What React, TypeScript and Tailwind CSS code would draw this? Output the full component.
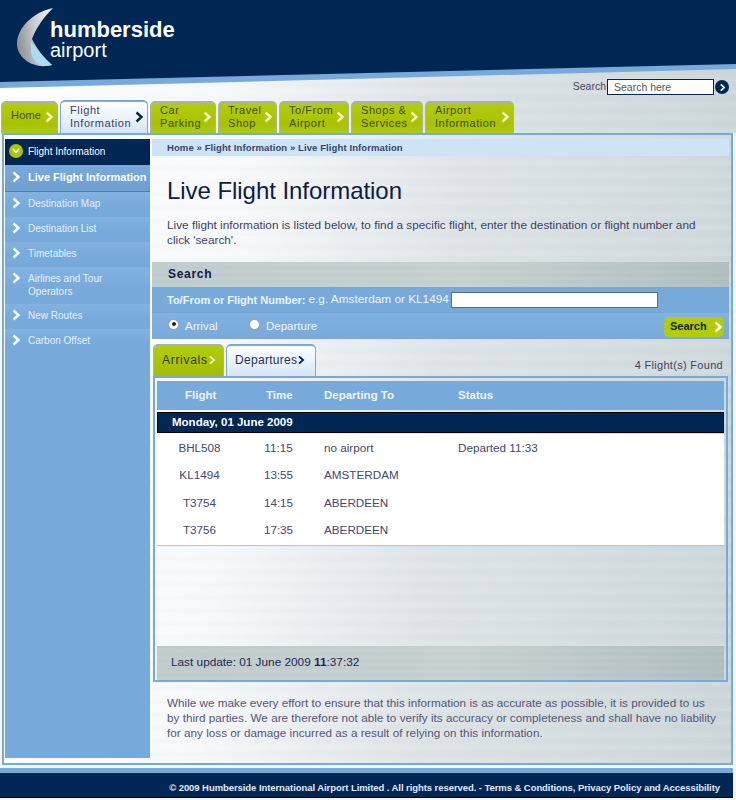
const Chev = ({ c = "#ffffff", s = 10 }: { c?: string; s?: number }) => (
  <svg width={s} height={s + 2} viewBox="0 0 10 12" className="shrink-0">
    <path d="M2.5 1.5 L7.5 6 L2.5 10.5" fill="none" stroke={c} strokeWidth="2.4" />
  </svg>
);

const tabs = [
  { l: ["Home"], w: "w-[57px]" },
  { l: ["Flight", "Information"], w: "w-[88px]", active: true },
  { l: ["Car", "Parking"], w: "w-[66px]" },
  { l: ["Travel", "Shop"], w: "w-[59px]" },
  { l: ["To/From", "Airport"], w: "w-[70px]" },
  { l: ["Shops &", "Services"], w: "w-[72px]" },
  { l: ["Airport", "Information"], w: "w-[89px]" },
];

const side = [
  { t: ["Destination Map"], h: "h-[25px]" },
  { t: ["Destination List"], h: "h-[25px]" },
  { t: ["Timetables"], h: "h-[25px]" },
  { t: ["Airlines and Tour", "Operators"], h: "h-[37px]" },
  { t: ["New Routes"], h: "h-[25px]" },
  { t: ["Carbon Offset"], h: "h-[25px]" },
];

const rows = [
  ["BHL508", "11:15", "no airport", "Departed 11:33"],
  ["KL1494", "13:55", "AMSTERDAM", ""],
  ["T3754", "14:15", "ABERDEEN", ""],
  ["T3756", "17:35", "ABERDEEN", ""],
];

const metal =
  "bg-[repeating-linear-gradient(0deg,rgba(255,255,255,0.07)_0px,rgba(255,255,255,0.07)_3px,rgba(255,255,255,0)_6px,rgba(120,135,140,0.025)_9px,rgba(255,255,255,0)_13px),linear-gradient(95deg,#ffffff_0%,#f6f8f9_32%,#dfe5e7_58%,#d6dee0_78%,#ccd6d8_100%)]";
const bar =
  "bg-[repeating-linear-gradient(0deg,rgba(255,255,255,0.06)_0px,rgba(255,255,255,0.06)_2px,rgba(255,255,255,0)_4px,rgba(255,255,255,0)_7px),linear-gradient(90deg,#bfcaca_0%,#c6d0cf_55%,#afbdbd_100%)]";

export default function App() {
  return (
    <div className="relative w-[736px] h-[800px] overflow-hidden bg-[#f4f6f7] font-['Liberation_Sans',Arial,sans-serif] text-[11px] text-[#3d3f6b]">
      <div className={metal}>
        <header className="relative h-[100px]">
          <svg className="absolute left-0 top-0" width="736" height="90" viewBox="0 0 736 90">
            <polygon points="0,0 736,0 736,69 0,88" fill="#77a9da" />
            <polygon points="0,0 736,0 736,64 0,82" fill="#002654" />
            <defs>
              <linearGradient id="m" x1="0" y1="0.5" x2="1" y2="0.2">
                <stop offset="0" stopColor="#8f9499" />
                <stop offset="0.55" stopColor="#cfd2d5" />
                <stop offset="1" stopColor="#eef0f1" />
              </linearGradient>
            </defs>
            <path d="M53 8 C33 12 17 28 17 44 C17 58 34 70 52 65 C44 58 37 49 32 39 C36 28 44 17 53 8 Z" fill="url(#m)" />
            <path d="M31 42 C37 50 44 58 52 65 C42 68 33 62 31 53 Z" fill="#a9dcf5" />
          </svg>
          <div className="relative pl-[50px] pt-[18px] text-white">
            <div className="text-[22px] leading-[24px] font-bold">humberside</div>
            <div className="text-[20px] leading-[16px]">airport</div>
          </div>
          <div className="absolute right-[7px] top-[79px] flex items-center">
            <span className="text-[10.5px] text-[#3f4a63]">Search</span>
            <div className="w-[107px] h-[16px] ml-[1px] border border-[#002654] bg-white pl-[6px] text-[10.5px] leading-[15px] text-[#555]">
              Search here
            </div>
            <div className="ml-[1px] w-[14px] h-[14px] rounded-full bg-[#002654] flex items-center justify-center">
              <Chev s={7} />
            </div>
          </div>
        </header>

        <nav className="relative z-10 flex items-end gap-[2px] pl-[1px] h-[33px]">
          {tabs.map((t) => (
            <div
              key={t.l[0]}
              className={`${t.w} h-[32px] rounded-t-[5px] flex items-center justify-between pl-[9px] pr-[3px] pb-[2px] text-[11px] leading-[13px] tracking-[0.55px] border-t-2 border-x ${
                t.active
                  ? "h-[33px] border-[#77a9da] bg-[linear-gradient(180deg,#ffffff,#d6e6f6)] text-[#3a3f68]"
                  : "border-[#a9b3a8] bg-[linear-gradient(180deg,#b4cc10,#a9c200_70%,#b0c81a)] text-[#3d4d10]"
              }`}
            >
              <div className={t.l.length === 1 ? "mb-[4px] tracking-[0.2px]" : ""}>
                {t.l.map((x) => (
                  <div key={x} className="whitespace-nowrap">{x}</div>
                ))}
              </div>
              <Chev c={t.active ? "#002654" : "#f2f6c8"} />
            </div>
          ))}
        </nav>
      </div>

      <main className={`ml-[2px] mr-[3px] h-[632px] border-2 border-[#77a9da] flex gap-[2px] pl-[1px] pr-[2px] pt-[4px] pb-[5px] ${metal}`}>
        <aside className="w-[145px] h-full bg-[#77a9da] text-white shrink-0">
          <div className="h-[26px] bg-[#002654] flex items-center pl-[4px] pb-[2px] gap-[5px] text-[10px]">
            <span className="w-[14px] h-[14px] rounded-full bg-[#a9c700] flex items-center justify-center">
              <svg width="8" height="6" viewBox="0 0 8 6"><path d="M1 1 L4 4.5 L7 1" fill="none" stroke="#fff" strokeWidth="1.6" /></svg>
            </span>
            Flight Information
          </div>
          <div className="h-[27px] border-b border-[#4f7fb0] flex items-center pl-[6px] pb-[2px] gap-[7px] text-[11px] font-bold bg-[linear-gradient(180deg,#77a9da,#6f9fd0)] whitespace-nowrap">
            <Chev />
            Live Flight Information
          </div>
          {side.map((s) => (
            <div key={s.t[0]} className={`${s.h} flex items-start pt-[5px] pl-[6px] gap-[7px] text-[10px] leading-[13px] text-[#e6f0fa] bg-[linear-gradient(180deg,#82b2e0,#77a9da_60%)]`}>
              <Chev />
              <div>
                {s.t.map((x) => (
                  <div key={x}>{x}</div>
                ))}
              </div>
            </div>
          ))}
        </aside>

        <section className="flex-1 min-w-0 flex flex-col">
          <div className="h-[17px] bg-[#cfe3f6] pl-[15px] text-[9.5px] leading-[18px] font-bold tracking-[0.1px] text-[#34466b]">
            Home » Flight Information » Live Flight Information
          </div>
          <h1 className="mt-[20px] pl-[15px] text-[24px] leading-[30px] font-normal tracking-[-0.05px] text-[#0f1c44]">
            Live Flight Information
          </h1>
          <p className="mt-[12px] pl-[15px] pr-[30px] text-[11.8px] leading-[15px]">
            Live flight information is listed below, to find a specific flight, enter the destination or flight number and click 'search'.
          </p>

          <div className={`mt-[14px] h-[25px] ${bar} pl-[16px] text-[12px] leading-[25px] font-bold tracking-[0.7px] text-[#0e2048]`}>
            Search
          </div>
          <div className="h-[52px] bg-[#77a9da] text-[#eef5fb] text-[11px]">
            <div className="h-[26px] flex items-center pl-[15px]">
              <span className="font-bold">To/From or Flight Number:</span>
              <span className="ml-[3px] text-[11.8px]">e.g. Amsterdam or KL1494</span>
              <div className="ml-[2px] w-[207px] h-[16px] bg-white border border-[#5f6c7d]" />
            </div>
            <div className="h-[26px] flex items-center pl-[16px] pr-[5px] pt-[1px] bg-[linear-gradient(180deg,#82b2e0,#77a9da)] text-[11.5px]">
              <span className="mb-[5px] w-[11px] h-[11px] rounded-full bg-white border border-[#999] flex items-center justify-center">
                <span className="w-[4px] h-[4px] rounded-full bg-[#222]" />
              </span>
              <span className="ml-[6px] w-[64px]">Arrival</span>
              <span className="mb-[5px] w-[11px] h-[11px] rounded-full bg-white border border-[#999]" />
              <span className="ml-[6px]">Departure</span>
              <div className="ml-auto w-[60px] h-[20px] rounded-[5px] bg-[#b1cc0a] flex items-center justify-between pl-[6px] pr-[1px] text-[11px] font-bold text-[#10243f]">
                Search
                <Chev />
              </div>
            </div>
          </div>

          <div className="mt-[5px] h-[32px] flex items-end gap-[2px] pl-[1px] pr-[6px]">
            <div className="w-[71px] h-[32px] rounded-t-[5px] border-t-2 border-x border-[#a9b3a8] bg-[linear-gradient(180deg,#b4cc10,#a4bd00)] flex items-center pl-[8px] pb-[3px] text-[12px] tracking-[0.7px] text-[#26380c]">
              Arrivals
              <Chev c="#f2f6c8" s={8} />
            </div>
            <div className="w-[90px] h-[32px] rounded-t-[5px] border-t-2 border-x border-[#77a9da] bg-[linear-gradient(180deg,#ffffff,#d6e6f6)] flex items-center pl-[8px] pb-[3px] text-[12px] tracking-[0.3px] text-[#26325a]">
              Departures
              <Chev c="#002654" s={8} />
            </div>
            <div className="ml-auto mb-[3px] text-[11px] tracking-[0.3px] text-[#3d4560]">4 Flight(s) Found</div>
          </div>

          <div className="h-[306px] mx-[1px] border-2 border-[#77a9da] flex flex-col px-[2px] pt-[3px]">
            <div className="pb-[2px]">
              <div className="grid grid-cols-[109px_58px_134px_1fr] h-[29px] bg-[#77a9da] text-[11.5px] leading-[29px] font-bold text-[#eef5fb]">
                <div className="pl-[28px]">Flight</div>
                <div>Time</div>
                <div>Departing To</div>
                <div>Status</div>
              </div>
            </div>
            <div className="h-[21px] bg-[#002654] border border-[#000] pl-[14px] text-[11.5px] leading-[19px] font-bold text-white">
              Monday, 01 June 2009
            </div>
            <div className="mt-[1px] h-[112px] bg-white text-[11.7px] text-[#44476f] border-b border-[#a8c8e8]">
              {rows.map((r) => (
                <div key={r[0]} className="grid grid-cols-[85px_73px_143px_1fr] h-[27.5px] items-center">
                  <div className="text-center">{r[0]}</div>
                  <div className="text-center">{r[1]}</div>
                  <div className="pl-[9px]">{r[2]}</div>
                  <div>{r[3]}</div>
                </div>
              ))}
            </div>
            <div className={`mt-auto h-[34px] ${bar} pl-[14px] text-[11.8px] leading-[33px] text-[#1a2a55]`}>
              <span>Last update: 01 June 2009 </span>
              <span className="font-bold">11</span>
              <span>:37:32</span>
            </div>
          </div>

          <p className="mt-[13px] pl-[15px] pr-[12px] text-[11.7px] leading-[15px] tracking-[0.02px] text-[#55557a]">
            While we make every effort to ensure that this information is as accurate as possible, it is provided to us by third parties. We are therefore not able to verify its accuracy or completeness and shall have no liability for any loss or damage incurred as a result of relying on this information.
          </p>
        </section>
      </main>

      <footer className="mr-[3px] mt-[3px]">
        <div className="h-[5px] bg-[#77a9da]" />
        <div className="h-[25px] bg-[#002654] border-b border-[#000] text-right pr-[13px] text-[9.5px] leading-[30px] font-bold tracking-[-0.07px] text-[#e4ebf3]">
          © 2009 Humberside International Airport Limited . All rights reserved. - Terms &amp; Conditions, Privacy Policy and Accessibility
        </div>
      </footer>
    </div>
  );
}
